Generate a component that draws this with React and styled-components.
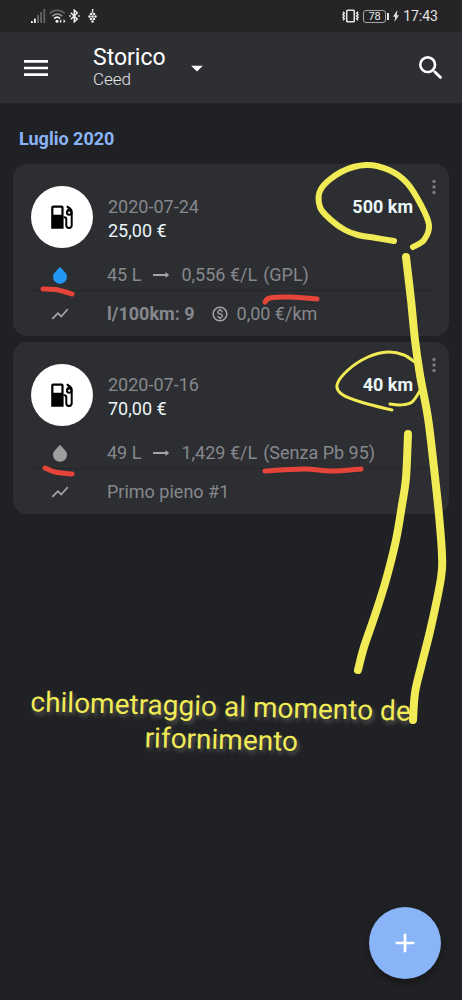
import React from 'react';
import styled, { createGlobalStyle } from 'styled-components';
import {
  MdAdd,
  MdArrowDropDown,
  MdMenu,
  MdOutlineMonetizationOn,
  MdSearch,
  MdShowChart,
} from 'react-icons/md';

const GlobalStyle = createGlobalStyle`
  :root {
    --page: #202124;
    --status: #252527;
    --surface: #2d2e32;
    --muted: #85888c;
    --text: #eaf6f8;
    --accent: #8ab4f8;
    --marker: #f1eb55;
    --marker_red: #e5443a;
  }
  * {
    box-sizing: border-box;
  }
  body {
    margin: 0;
    background: var(--page);
    color: var(--text);
    font-family: Roboto, 'Liberation Sans', sans-serif;
  }
  h1, h2, p {
    margin: 0;
    font-weight: 400;
  }
  button {
    padding: 0;
    border: 0;
    background: none;
    color: inherit;
    font: inherit;
    cursor: pointer;
  }
  svg {
    display: block;
    flex-shrink: 0;
  }
`;

const PageStyles = styled.div`
  position: relative;
  min-height: 100vh;
  overflow: hidden;
`;

const StatusBar = styled.div`
  display: flex;
  justify-content: space-between;
  align-items: center;
  height: 32px;
  padding: 0 24px 0 31px;
  background: var(--status);
  color: #e4e4e4;
  font-size: 14px;
`;

const StatusGroup = styled.div`
  display: flex;
  align-items: center;
  gap: ${(props) => props.$gap}px;
`;

const Battery = styled.span`
  display: flex;
  align-items: center;
  gap: 1px;
  .battery__level {
    width: 23px;
    height: 13px;
    border: 1px solid #a5a5a5;
    border-radius: 3px;
    font-size: 11px;
    line-height: 12px;
    text-align: center;
  }
  .battery__tip {
    width: 2px;
    height: 7px;
    background: #e4e4e4;
  }
`;

const Header = styled.header`
  display: flex;
  align-items: center;
  height: 72px;
  padding: 0 15px 0 20px;
  background: #2e2f33;
  border-bottom: 1px solid #262227;
  color: #fff;
`;

const VehiclePicker = styled.button`
  display: flex;
  align-items: center;
  gap: 17px;
  margin-left: 41px;
  margin-right: auto;
  text-align: left;
`;

const Title = styled.h1`
  font-size: 23px;
  line-height: 23px;
`;

const Subtitle = styled.p`
  font-size: 17px;
  line-height: 21px;
  font-weight: 300;
  color: #e3e3e5;
`;

const MonthTitle = styled.h2`
  padding: 23px 19px 13px;
  font-size: 18px;
  line-height: 24px;
  font-weight: 700;
  color: var(--accent);
`;

const List = styled.main`
  display: flex;
  flex-direction: column;
  gap: 6px;
  padding: 0 13px;
`;

const Card = styled.article`
  background: var(--surface);
  border-radius: 14px;
  font-size: 18px;
  line-height: 24px;
`;

const CardHead = styled.div`
  display: flex;
  align-items: flex-start;
  gap: 14px;
  padding: 14px 8px 10px 18px;
`;

const Avatar = styled.div`
  display: grid;
  place-items: center;
  width: 62px;
  height: 62px;
  margin-top: 8px;
  border-radius: 50%;
  background: #fff;
  color: #000;
`;

const Info = styled.div`
  flex: 1;
  padding: 17px 0 0 1px;
  .info__date {
    color: var(--muted);
  }
`;

const Odometer = styled.p`
  padding-top: 17px;
  && {
    font-weight: 700;
  }
`;

const MoreButton = styled.button`
  display: grid;
  place-items: center;
  width: 14px;
  height: 18px;
  color: #7b7d80;
`;

const DetailRow = styled.div`
  display: flex;
  align-items: center;
  height: ${(props) => props.$height}px;
  margin: 0 14px;
  color: var(--muted);
  ${(props) => props.$divided && 'padding-top: 2px; border-bottom: 1px solid #25262a;'}
`;

const IconCell = styled.span`
  display: flex;
  justify-content: center;
  width: 66px;
  margin-right: 14px;
  color: ${(props) => props.$color || '#a3a4a6'};
`;

const Group = styled.span`
  display: flex;
  align-items: center;
  gap: ${(props) => props.$gap}px;
`;

const AddButton = styled.button`
  position: fixed;
  right: 21px;
  bottom: 21px;
  display: grid;
  place-items: center;
  width: 72px;
  height: 72px;
  border-radius: 50%;
  && {
    background: var(--accent);
    color: #fff;
  }
  box-shadow: 0 4px 9px rgba(0, 0, 0, 0.35);
`;

const MarkerLayer = styled.svg`
  position: absolute;
  top: 0;
  left: 0;
  pointer-events: none;
  fill: none;
  stroke-linecap: round;
  stroke-linejoin: round;
`;

const MarkerNote = styled.p`
  position: absolute;
  top: 690px;
  left: 30px;
  color: var(--marker);
  font-size: 28px;
  line-height: 33px;
  white-space: nowrap;
  text-shadow: 2px 3px 4px rgba(255, 255, 225, 0.28);
  transform: rotate(1.4deg);
  span {
    display: block;
  }
  span + span {
    padding-left: 115px;
  }
`;

const refuels = [
  {
    date: '2020-07-24',
    price: '25,00 €',
    odometer: '500 km',
    liters: '45 L',
    unitPrice: '0,556 €/L',
    fuel: '(GPL)',
    dropColor: '#2196f3',
    consumption: 'l/100km: 9',
    cost: '0,00 €/km',
  },
  {
    date: '2020-07-16',
    price: '70,00 €',
    odometer: '40 km',
    liters: '49 L',
    unitPrice: '1,429 €/L',
    fuel: '(Senza Pb 95)',
    dropColor: '#9e9e9e',
    note: 'Primo pieno #1',
  },
];

const strokes = [
  { width: 6, points: [[394, 241], [376, 238], [358, 235], [345, 230], [331, 220], [320, 207], [321, 189], [341, 172], [366, 165], [389, 170], [407, 183], [421, 205], [429, 225], [424, 240], [413, 247]] },
  { width: 8, points: [[406, 257], [411, 300], [415, 340], [420, 375], [428, 418], [434, 468], [439, 515], [442, 555], [441, 578], [431, 627], [421, 667], [415, 693], [413, 720]] },
  { width: 3, points: [[392, 410], [364, 403], [343, 395], [337, 385], [348, 370], [368, 357], [388, 352], [404, 355], [416, 363]] },
  { width: 3, points: [[390, 404], [400, 405], [412, 402], [421, 389]] },
  { width: 8, points: [[408, 434], [406, 478], [402, 505], [396, 540], [386, 580], [375, 615], [364, 647], [358, 670]] },
  { width: 5, red: true, points: [[43, 289], [58, 290], [72, 294]] },
  { width: 5, red: true, points: [[265, 302], [270, 298], [291, 297], [317, 299]] },
  { width: 5, red: true, points: [[45, 468], [55, 472], [72, 474]] },
  { width: 5, red: true, points: [[265, 471], [304, 469], [331, 471], [361, 469]] },
];

// Catmull-Rom spline through the points, written as cubic beziers
function smoothPath(points) {
  let d = `M${points[0]}`;
  for (let i = 0; i < points.length - 1; i += 1) {
    const p0 = points[i - 1] || points[i];
    const p1 = points[i];
    const p2 = points[i + 1];
    const p3 = points[i + 2] || p2;
    const c1 = [p1[0] + (p2[0] - p0[0]) / 6, p1[1] + (p2[1] - p0[1]) / 6];
    const c2 = [p2[0] - (p3[0] - p1[0]) / 6, p2[1] - (p3[1] - p1[1]) / 6];
    d += `C${c1} ${c2} ${p2}`;
  }
  return d;
}

function SignalIcon() {
  return (
    <svg width="15" height="14" viewBox="0 0 15 14" fill="#666">
      <path d="M0 12h1.800v2H0zM3 9.500h1.800V14H3z" fill="#f0f0f0" />
      <path d="M6.200 6h1.800v8H6.200zM9.200 3h1.800v11H9.200zM12.400 0h1.800v14h-1.800z" />
    </svg>
  );
}

function WifiIcon() {
  return (
    <svg width="17" height="14" viewBox="0 0 17 14" fill="none" strokeWidth="1.500">
      <path d="M.8 4.500C5 .300 11.500.300 15.700 4.500" stroke="#666" />
      <path d="M3.200 7.200c3-2.800 7-2.800 10 0" stroke="#999" />
      <path d="M5.200 9.600c1.700-1.700 4.100-1.700 5.800 0" stroke="#f0f0f0" strokeWidth="1.800" />
      <circle cx="8" cy="12.300" r="1.500" fill="#f0f0f0" />
      <path d="M10.300 12.200l2-1.900v3.800zM16.500 12.200l-2-1.900v3.800z" fill="#f0f0f0" />
    </svg>
  );
}

function BluetoothIcon() {
  return (
    <svg width="11" height="14" viewBox="0 0 11 14" fill="none" stroke="#f0f0f0" strokeWidth="1.500">
      <path d="M1.800 3.700l6.500 6.300L5.300 12.800V1.200l3 2.800-6.500 6.300" />
      <path d="M.2 7h1.600M9.200 7h1.600" />
    </svg>
  );
}

function GrapesIcon() {
  return (
    <svg width="9" height="14" viewBox="0 0 9 14" fill="#e4e4e4">
      <path d="M4 0h1.500L5 4H3.800z" />
      <circle cx="3" cy="5" r="1.300" />
      <circle cx="6" cy="5" r="1.300" />
      <circle cx="1.500" cy="7.500" r="1.300" />
      <circle cx="4.500" cy="7.500" r="1.300" />
      <circle cx="7.500" cy="7.500" r="1.300" />
      <circle cx="3" cy="10" r="1.300" />
      <circle cx="6" cy="10" r="1.300" />
      <circle cx="4.500" cy="12.500" r="1.300" />
    </svg>
  );
}

function VibrateIcon() {
  return (
    <svg width="17" height="14" viewBox="0 0 18 14" fill="none" stroke="#e4e4e4" strokeWidth="1.600">
      <rect x="5" y=".8" width="8" height="12.400" rx="1" />
      <path d="M1 2.500l1.500 1.500L1 5.500 2.500 7 1 8.500 2.500 10 1 11.500M17 2.500l-1.500 1.500L17 5.500 15.500 7 17 8.500 15.500 10l1.500 1.500" />
    </svg>
  );
}

function BoltIcon() {
  return (
    <svg width="6" height="12" viewBox="0 0 6 12" fill="#e4e4e4">
      <path d="M4.500 0L0 6.800h2.300L1.300 12 6 5.200H3.700z" />
    </svg>
  );
}

function PumpIcon() {
  return (
    <svg width="24" height="24" viewBox="0 0 24 24">
      <path
        fillRule="evenodd"
        d="M3.200.5h8.400a2 2 0 0 1 2 2v21.300H1.200V2.500a2 2 0 0 1 2-2zM3.400 2.700v7.100h8V2.700z"
      />
      <g fill="none" stroke="currentColor" strokeWidth="2">
        <path d="M13.500 12.300h.8a2 2 0 0 1 2 2v6a2.700 2.700 0 0 0 5.400 0V6.500c0-1.100-.4-1.900-1.200-2.600L16.800 1.200" />
        <circle cx="19.200" cy="7.600" r="2.200" />
        <path d="M19 3.500l-1.900 3.200" />
      </g>
    </svg>
  );
}

function DropIcon() {
  return (
    <svg width="14" height="17" viewBox="0 0 14 17" fill="currentColor">
      <path d="M7 .2c.6 0 .9.500 1.400 1.100L12.200 5.500C13.400 6.900 14 8.200 14 9.900a7 6.900 0 0 1-14 0c0-1.700.6-3 1.800-4.400L5.600 1.300C6.100.7 6.400.2 7 .2z" />
    </svg>
  );
}

function ArrowIcon() {
  return (
    <svg width="18" height="8" viewBox="0 0 18 8">
      <path d="M1 3.100h12.500V1L17.200 4l-3.700 3V4.900H1z" fill="#a3a4a6" />
    </svg>
  );
}

function MoreIcon() {
  return (
    <svg width="4" height="16" viewBox="0 0 4 16" fill="currentColor">
      <circle cx="2" cy="2.500" r="1.700" />
      <circle cx="2" cy="8" r="1.700" />
      <circle cx="2" cy="13.500" r="1.700" />
    </svg>
  );
}

function RefuelCard({ item }) {
  return (
    <Card>
      <CardHead>
        <Avatar>
          <PumpIcon />
        </Avatar>
        <Info>
          <p className="info__date">{item.date}</p>
          <p>{item.price}</p>
        </Info>
        <Odometer>{item.odometer}</Odometer>
        <MoreButton type="button" aria-label="Altro">
          <MoreIcon />
        </MoreButton>
      </CardHead>
      <DetailRow $height={33} $divided>
        <IconCell $color={item.dropColor}>
          <DropIcon />
        </IconCell>
        <Group $gap={6}>
          <Group $gap={11}>
            <span>{item.liters}</span>
            <ArrowIcon />
            <span>{item.unitPrice}</span>
          </Group>
          <span>{item.fuel}</span>
        </Group>
      </DetailRow>
      <DetailRow $height={45}>
        <IconCell>
          <MdShowChart size={20} />
        </IconCell>
        {item.note ? (
          <span>{item.note}</span>
        ) : (
          <Group $gap={16}>
            <b>{item.consumption}</b>
            <Group $gap={8}>
              <MdOutlineMonetizationOn size={18} color="#a3a4a6" />
              <span>{item.cost}</span>
            </Group>
          </Group>
        )}
      </DetailRow>
    </Card>
  );
}

export default function App() {
  return (
    <PageStyles>
      <GlobalStyle />
      <StatusBar>
        <StatusGroup $gap={8}>
          <StatusGroup $gap={3}>
            <SignalIcon />
            <WifiIcon />
            <BluetoothIcon />
          </StatusGroup>
          <GrapesIcon />
        </StatusGroup>
        <StatusGroup $gap={4}>
          <VibrateIcon />
          <Battery>
            <span className="battery__level">78</span>
            <span className="battery__tip" />
          </Battery>
          <BoltIcon />
          <span>17:43</span>
        </StatusGroup>
      </StatusBar>
      <Header>
        <button type="button" aria-label="Menu">
          <MdMenu size={32} />
        </button>
        <VehiclePicker type="button">
          <div>
            <Title>Storico</Title>
            <Subtitle>Ceed</Subtitle>
          </div>
          <MdArrowDropDown size={28} />
        </VehiclePicker>
        <button type="button" aria-label="Cerca">
          <MdSearch size={32} />
        </button>
      </Header>
      <MonthTitle>Luglio 2020</MonthTitle>
      <List>
        {refuels.map((item) => (
          <RefuelCard key={item.date} item={item} />
        ))}
      </List>
      <AddButton type="button" aria-label="Aggiungi">
        <MdAdd size={32} />
      </AddButton>
      <MarkerNote>
        <span>chilometraggio al momento de</span>
        <span>rifornimento</span>
      </MarkerNote>
      <MarkerLayer width="462" height="740" viewBox="0 0 462 740">
        {strokes.map((stroke) => (
          <path
            key={stroke.points[0].join()}
            d={smoothPath(stroke.points)}
            stroke={stroke.red ? 'var(--marker_red)' : 'var(--marker)'}
            strokeWidth={stroke.width}
          />
        ))}
      </MarkerLayer>
    </PageStyles>
  );
}
